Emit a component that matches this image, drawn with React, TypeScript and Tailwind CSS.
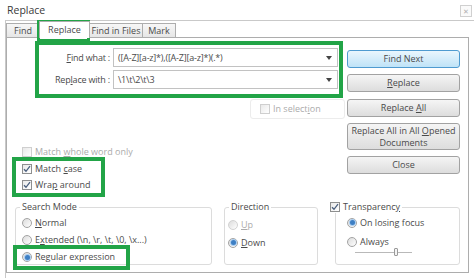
const GREEN = "border-[#22a447]";

function Check({ checked, disabled }: { checked?: boolean; disabled?: boolean }) {
  return (
    <span
      className={`flex h-[10px] w-[10px] shrink-0 items-center justify-center border bg-gradient-to-br from-[#e9e9e9] to-white ${
        disabled ? "border-[#cfcfcf]" : "border-[#8e8f8f]"
      }`}
    >
      {checked && (
        <svg width="8" height="8" viewBox="0 0 8 8">
          <path d="M1 4.2 L3 6.3 L7 1.2" fill="none" stroke="#4a5f7e" strokeWidth="1.3" />
        </svg>
      )}
    </span>
  );
}

function Radio({ checked, disabled }: { checked?: boolean; disabled?: boolean }) {
  return (
    <span
      className={`flex h-[10px] w-[10px] shrink-0 items-center justify-center rounded-full border bg-gradient-to-br from-[#dcdcdc] to-white ${
        disabled ? "border-[#d2d2d2]" : "border-[#a3a3a3]"
      }`}
    >
      {checked && <span className="h-[5px] w-[5px] rounded-full bg-[#3e7fc4] ring-1 ring-[#a9cdf0]" />}
    </span>
  );
}

function Btn({ children, primary, tall }: { children: React.ReactNode; primary?: boolean; tall?: boolean }) {
  return (
    <div
      className={`flex w-[113px] items-center justify-center rounded-[3px] border text-center leading-[12px] ${
        tall ? "h-[27px]" : "h-[18px]"
      } ${
        primary
          ? "border-[#4f9bd0] bg-gradient-to-b from-[#eaf6fd] to-[#bfe3f7]"
          : "border-[#a2a2a2] bg-gradient-to-b from-[#f5f5f5] to-[#dddddd]"
      }`}
    >
      {children}
    </div>
  );
}

function Combo({ value }: { value: string }) {
  return (
    <div className="ml-[3px] flex h-[19px] w-[225px] items-center border border-[#c2c2c2] bg-white pl-[4px] pr-[5px]">
      <span className="flex-1 whitespace-nowrap tracking-[-0.2px]">{value}</span>
      <svg width="6" height="4" viewBox="0 0 6 4">
        <path d="M0 0 H6 L3 4 Z" fill="#444" />
      </svg>
    </div>
  );
}

function Row({ children, className = "" }: { children: React.ReactNode; className?: string }) {
  return <div className={`flex items-center gap-[3px] whitespace-nowrap ${className}`}>{children}</div>;
}

export default function App() {
  return (
    <div className="relative h-[278px] w-[474px] overflow-hidden bg-white font-['Open_Sans','Noto_Sans',sans-serif] text-[9px] text-[#4a4a4a]">
      {/* title bar */}
      <div className="flex h-[20px] items-start">
        <span className="pl-[7px] pt-[3px] text-[10.5px] leading-[14px] text-[#3a3a3a]">Replace</span>
        <span className="ml-auto mr-[2px] mt-[5px] flex h-[12px] w-[12px] items-center justify-center border border-[#d0d0d0] bg-[#fafafa] text-[7px] leading-none text-[#b0b0b0]">
          ✕
        </span>
      </div>

      {/* dialog frame */}
      <div className="ml-[5px] h-[258px] border-l border-t border-[#c9c9c9]">
        {/* tabs */}
        <div className="flex h-[16px] items-end">
          <div className="flex h-[14px] w-[34px] items-center justify-center border border-b-0 border-[#adadad] bg-gradient-to-b from-[#f7f7f7] to-[#e6e6e6]">
            Find
          </div>
          <div className="relative z-10 -mb-px -ml-px flex h-[17px] w-[51px] items-center justify-center border border-b-0 border-[#adadad] bg-white">
            Replace
          </div>
          <div className="-ml-px flex h-[14px] w-[54px] items-center justify-center border border-b-0 border-[#adadad] bg-gradient-to-b from-[#f7f7f7] to-[#e6e6e6]">
            Find in Files
          </div>
          <div className="-ml-px flex h-[14px] w-[34px] items-center justify-center border border-b-0 border-[#adadad] bg-gradient-to-b from-[#f7f7f7] to-[#e6e6e6]">
            Mark
          </div>
        </div>

        {/* tab panel */}
        <div className="h-[236px] w-[463px] border border-[#adadad] bg-white">
          <div className="flex h-[163px]">
            {/* left column */}
            <div className="w-[340px]">
              <div className={`ml-[28px] mt-[3px] flex h-[57px] w-[308px] flex-col gap-[3px] border-[4px] ${GREEN} pt-[3px]`}>
                <div className="flex items-center">
                  <span className="w-[71px] text-right whitespace-nowrap tracking-[-0.2px]">
                    <u>F</u>ind what :
                  </span>
                  <Combo value="([A-Z][a-z]*),([A-Z][a-z]*)(.*)" />
                </div>
                <div className="flex items-center">
                  <span className="w-[71px] text-right whitespace-nowrap tracking-[-0.2px]">
                    Rep<u>l</u>ace with :
                  </span>
                  <Combo value="\1\t\2\t\3" />
                </div>
              </div>

              <div className="ml-[243px] mt-[1px] flex h-[20px] w-[95px] items-center rounded-[3px] border border-[#ececec] pl-[9px] text-[#ababab]">
                <Row>
                  <Check disabled />
                  <span>
                    In select<u>i</u>on
                  </span>
                </Row>
              </div>

              <Row className="ml-[15px] mt-[26px] h-[14px] text-[#ababab]">
                <Check disabled />
                <span>
                  Match <u>w</u>hole word only
                </span>
              </Row>
              <div className={`ml-[5px] -mt-[2px] flex h-[40px] w-[93px] flex-col gap-[2px] border-[4px] ${GREEN} pl-[6px] pt-[1px]`}>
                <Row className="h-[14px]">
                  <Check checked />
                  <span>
                    Match <u>c</u>ase
                  </span>
                </Row>
                <Row className="h-[14px]">
                  <Check checked />
                  <span>
                    Wra<u>p</u> around
                  </span>
                </Row>
              </div>
            </div>

            {/* buttons */}
            <div className="mt-[12px] flex flex-col">
              <Btn primary>Find Next</Btn>
              <div className="mt-[6px]">
                <Btn>
                  <span>
                    <u>R</u>eplace
                  </span>
                </Btn>
              </div>
              <div className="mt-[7px]">
                <Btn>
                  <span>
                    Replace <u>A</u>ll
                  </span>
                </Btn>
              </div>
              <div className="mt-[6px]">
                <Btn tall>
                  <span>
                    Replace All in All <u>O</u>pened
                    <br />
                    Documents
                  </span>
                </Btn>
              </div>
              <div className="mt-[6px]">
                <Btn>Close</Btn>
              </div>
            </div>
          </div>

          {/* group boxes */}
          <div className="flex">
            <fieldset className="ml-[8px] h-[64px] w-[197px] rounded-[3px] border border-[#dcdcdc]">
              <legend className="ml-[4px] px-[2px] leading-[12px]">Search Mode</legend>
              <div className="flex flex-col gap-[1px] pl-[6px] pt-[2px]">
                <Row className="h-[16px]">
                  <Radio />
                  <span>
                    <u>N</u>ormal
                  </span>
                </Row>
                <Row className="h-[16px]">
                  <Radio />
                  <span>
                    E<u>x</u>tended (\n, \r, \t, \0, \x...)
                  </span>
                </Row>
                <Row className="h-[16px]">
                  <Radio checked />
                  <span>
                    Re<u>g</u>ular expression
                  </span>
                </Row>
              </div>
            </fieldset>

            <fieldset className="ml-[12px] h-[64px] w-[94px] rounded-[3px] border border-[#dcdcdc]">
              <legend className="ml-[4px] px-[2px] leading-[12px]">Direction</legend>
              <div className="flex flex-col gap-[1px] pl-[3px] pt-[3px]">
                <Row className="h-[17px] text-[#ababab]">
                  <Radio disabled />
                  <span>
                    <u>U</u>p
                  </span>
                </Row>
                <Row className="h-[17px]">
                  <Radio checked />
                  <span>
                    <u>D</u>own
                  </span>
                </Row>
              </div>
            </fieldset>

            <fieldset className="ml-[17px] h-[64px] w-[125px] rounded-[3px] border border-[#dcdcdc]">
              <legend className="-ml-[6px] pr-[2px] leading-[12px]">
                <Row>
                  <Check checked />
                  <span>
                    Transparenc<u>y</u>
                  </span>
                </Row>
              </legend>
              <div className="flex flex-col gap-[2px] pl-[11px] pt-[1px]">
                <Row className="h-[17px]">
                  <Radio checked />
                  <span>On losing focus</span>
                </Row>
                <Row className="h-[17px]">
                  <Radio />
                  <span>Always</span>
                </Row>
              </div>
              <div className="relative ml-[19px] mt-[2px] h-[1px] w-[57px] bg-[#b9b9b9]">
                <span className="absolute left-[39px] top-[-4px] h-[8px] w-[4px] rounded-[1px] border border-[#9a9a9a] bg-[#f4f4f4]" />
              </div>
            </fieldset>
          </div>
        </div>
      </div>

      {/* highlight annotations */}
      <div className={`absolute left-[37px] top-[20px] h-[22px] w-[53px] border-[3px] ${GREEN}`} />
      <div className={`absolute left-[13px] top-[245px] h-[25px] w-[117px] border-[4px] ${GREEN}`} />
    </div>
  );
}
